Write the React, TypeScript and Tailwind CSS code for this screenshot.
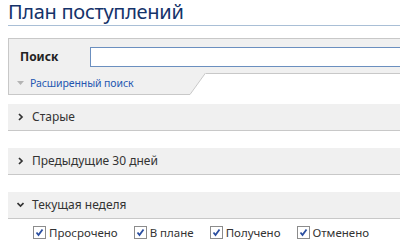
import React from "react";

const font = { fontFamily: '"Noto Sans", "Open Sans", sans-serif' };

function Check({ label }: { label: string }) {
  return (
    <div className="flex items-center gap-[3px]">
      <span className="w-[13px] h-[13px] border border-[#8c8c8c] bg-white flex items-center justify-center">
        <svg width="9" height="9" viewBox="0 0 9 9">
          <path d="M1.5 4.5 L3.5 7 L7.5 1.5" stroke="#2a4ea0" strokeWidth="1.8" fill="none" />
        </svg>
      </span>
      <span className="text-[11.5px] text-[#333]">{label}</span>
    </div>
  );
}

function Section({ title, open }: { title: string; open?: boolean }) {
  return (
    <div className="h-[27px] bg-[#f0f0f0] border-b border-[#c8c8c8] flex items-center pl-[9px] gap-[8px]">
      <svg width="7" height="8" viewBox="0 0 7 8">
        {open ? (
          <path d="M0.5 2 L3.5 5 L6.5 2" stroke="#333" strokeWidth="1.7" fill="none" />
        ) : (
          <path d="M2 1 L5 4 L2 7" stroke="#333" strokeWidth="1.7" fill="none" />
        )}
      </svg>
      <span className="text-[12px] text-[#333]">{title}</span>
    </div>
  );
}

export default function App() {
  return (
    <div className="w-[400px] h-[240px] overflow-hidden bg-white pl-[8px]" style={font}>
      <div className="h-[26px] border-b border-[#a9bfd6] flex items-start">
        <span className="text-[20px] leading-[23px] text-[#15336a] tracking-[-0.3px]">
          План поступлений
        </span>
      </div>
      <div className="mt-[12px]">
        <div className="bg-[#f0f0f0] border-t border-l border-[#c8c8c8] h-[35px] flex items-center pl-[11px] pt-[1px]">
          <span className="text-[12px] font-bold text-[#222] w-[70px]">Поиск</span>
          <div className="flex-1 h-[20px] bg-white border-y border-[#6b8fbf] border-l"></div>
        </div>
        <div className="flex items-start">
          <div className="w-[182px] h-[22px] bg-[#f0f0f0] border-l border-b border-[#c8c8c8] flex items-center pl-[8px] gap-[6px]">
            <svg width="7" height="5" viewBox="0 0 7 5">
              <path d="M0 0 L7 0 L3.5 4 Z" fill="#b4b4b4" />
            </svg>
            <span className="text-[10.5px] text-[#2557b0] tracking-[-0.1px]">Расширенный поиск</span>
          </div>
          <svg width="16" height="22" viewBox="0 0 16 22" className="block">
            <polygon points="0,0 15.5,0 0,21" fill="#f0f0f0" />
            <line x1="15.5" y1="0" x2="0" y2="21.5" stroke="#c8c8c8" strokeWidth="1" />
          </svg>
          <div className="flex-1 border-t border-[#c8c8c8]"></div>
        </div>
      </div>
      <div className="mt-[9px] flex flex-col gap-[17px]">
        <Section title="Старые" />
        <Section title="Предыдущие 30 дней" />
        <Section title="Текущая неделя" open />
      </div>
      <div className="flex items-center gap-[16px] pl-[25px] mt-[5px]">
        <Check label="Просрочено" />
        <Check label="В плане" />
        <Check label="Получено" />
        <Check label="Отменено" />
      </div>
    </div>
  );
}
